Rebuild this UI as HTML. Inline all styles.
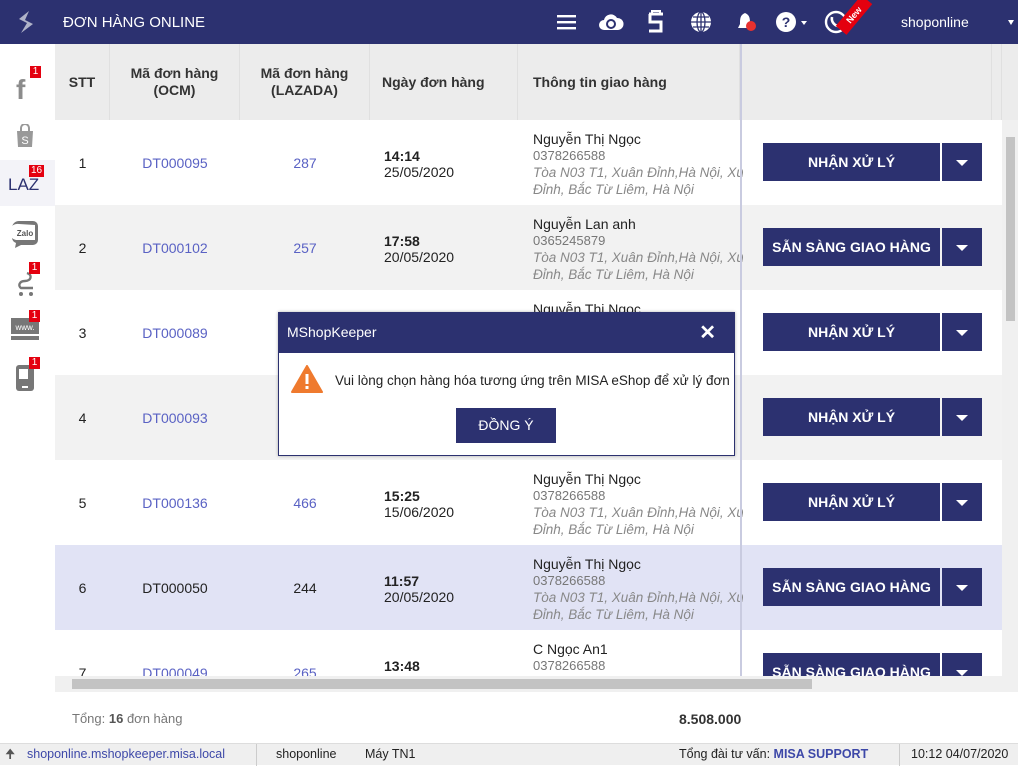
<!DOCTYPE html>
<html><head><meta charset="utf-8"><style>
*{box-sizing:border-box;margin:0;padding:0}
body{width:1018px;height:765px;overflow:hidden;position:relative;background:#fff;font-family:"Liberation Sans",Arial,sans-serif;font-size:14px;color:#222}
.hdr{position:absolute;left:0;top:0;width:1018px;height:44px;background:#2c3170;color:#fff}
.abs{position:absolute}
.side{position:absolute;left:0;top:44px;width:55px;height:699px;background:#fff}
.badge{position:absolute;background:#e4000f;color:#fff;font-size:10px;line-height:12px;padding:0 2px;min-width:11px;text-align:center}
.th{position:absolute;top:44px;height:76px;background:#ececec;font-weight:bold;font-size:14px;color:#333;display:flex;align-items:center;justify-content:center;text-align:center;border-right:1px solid #e0e0e0;line-height:17px}
.row{position:absolute;left:55px;width:947px;height:85px}
.c{position:absolute;top:0;height:85px;display:flex;align-items:center;justify-content:center}
.link{color:#5a62c4}
.info{position:absolute;left:478px;top:11px;width:210px;overflow:hidden;white-space:nowrap;line-height:16px;font-size:14px}
.info .p{color:#777;font-size:13px}
.info i{color:#888;font-size:13.5px}
.btn{position:absolute;left:708px;top:23px;width:177px;height:38px;background:#2c3170;color:#fff;font-weight:bold;font-size:14px;display:flex;align-items:center;justify-content:center;white-space:nowrap}
.dd{position:absolute;left:887px;top:23px;width:40px;height:38px;background:#2c3170}
.dd:after{content:"";position:absolute;left:14px;top:17px;border-left:6px solid transparent;border-right:6px solid transparent;border-top:6px solid #fff}
</style></head><body>
<div class="hdr">
 <svg class="abs" style="left:15px;top:10px" width="22" height="24" viewBox="0 0 22 24"><path d="M14 1 L4 9 L12 13 L6 23 L18 14 L10 10 Z" fill="#b0b3c8"/></svg>
 <div class="abs" style="left:63px;top:14px;font-size:15px">ĐƠN HÀNG ONLINE</div>
 <svg class="abs" style="left:557px;top:13px" width="20" height="18"><rect y="2" width="19" height="2.4" fill="#fff"/><rect y="8" width="19" height="2.4" fill="#fff"/><rect y="14" width="19" height="2.4" fill="#fff"/></svg>
 <svg class="abs" style="left:598px;top:11px" width="26" height="22" viewBox="0 0 26 22"><path d="M6 19 A5 5 0 0 1 6 9 A7 7 0 0 1 19 7 A6 6 0 0 1 20 19 Z" fill="#fff"/><circle cx="13" cy="13" r="4" fill="none" stroke="#2c3170" stroke-width="2"/></svg>
 <svg class="abs" style="left:647px;top:10px" width="18" height="24" viewBox="0 0 18 24"><path d="M5 4 V1 H13 V4" fill="none" stroke="#fff" stroke-width="2"/><path d="M2 4 H16 M3 4 V12 H14 V21 H2" fill="none" stroke="#fff" stroke-width="3"/></svg>
 <svg class="abs" style="left:690px;top:11px" width="22" height="22" viewBox="0 0 22 22"><circle cx="11" cy="11" r="10" fill="#fff"/><path d="M11 1 V21 M1 11 H21 M3 6 H19 M3 16 H19" stroke="#2c3170" stroke-width="1.3"/><ellipse cx="11" cy="11" rx="4" ry="10" fill="none" stroke="#2c3170" stroke-width="1.3"/></svg>
 <svg class="abs" style="left:736px;top:11px" width="22" height="22" viewBox="0 0 22 22"><path d="M9 2 C4 4 4 8 4 13 L2 17 H16 L14 13 C14 8 14 4 9 2Z" fill="#fff"/><circle cx="15" cy="15" r="5" fill="#e8312f"/></svg>
 <svg class="abs" style="left:776px;top:11px" width="36" height="22" viewBox="0 0 36 22"><circle cx="10" cy="11" r="10" fill="#fff"/><text x="10" y="16" font-size="14" font-weight="bold" text-anchor="middle" fill="#2c3170" font-family="Liberation Sans">?</text><path d="M25 10 H31 L28 14Z" fill="#fff"/></svg>
 <svg class="abs" style="left:824px;top:10px" width="24" height="24" viewBox="0 0 24 24"><circle cx="12" cy="12" r="10" fill="none" stroke="#fff" stroke-width="2.4"/><path d="M8 7 C7 12 11 17 17 16" fill="none" stroke="#fff" stroke-width="2.6"/></svg>
 <div class="abs" style="width:40px;height:14px;background:#e4000f;transform:rotate(-50deg);transform-origin:center;top:8px;left:834px;color:#fff;font-size:9px;font-weight:bold;text-align:center;line-height:14px">New</div>
 <div class="abs" style="left:901px;top:14px;font-size:14px">shoponline</div>
 <div class="abs" style="left:1008px;top:20px;border-left:3.5px solid transparent;border-right:3.5px solid transparent;border-top:5px solid #fff"></div>
</div>

<div class="side">
 <div class="abs" style="left:16px;top:30px;font-size:28px;font-weight:bold;color:#8c8c8c;font-family:'Liberation Sans'">f</div>
 <div class="badge" style="left:30px;top:22px">1</div>
 <svg class="abs" style="left:14px;top:80px" width="22" height="24"><path d="M3 7 H19 L18 23 H4Z" fill="#999"/><path d="M7 7 V4 A4 4 0 0 1 15 4 V7" fill="none" stroke="#999" stroke-width="2"/><text x="11" y="20" font-size="11" fill="#fff" text-anchor="middle" font-family="Liberation Sans">S</text></svg>
 <div class="abs" style="left:0;top:116px;width:55px;height:46px;background:#f3f3f8"></div>
 <div class="abs" style="left:8px;top:131px;font-size:17px;color:#2c3170">LAZ</div>
 <div class="badge" style="left:29px;top:121px">16</div>
 <svg class="abs" style="left:11px;top:176px" width="28" height="28"><path d="M8 1 H22 A5 5 0 0 1 27 6 V20 A5 5 0 0 1 22 25 H10 L4 28 L5 23 A6 6 0 0 1 1 18 V8 A7 7 0 0 1 8 1Z" fill="#777"/><path d="M8 4 A8 8 0 0 0 5 20 H24 V5 Z" fill="#fff"/><text x="14" y="16" font-size="8" font-weight="bold" fill="#555" text-anchor="middle" font-family="Liberation Sans">Zalo</text></svg>
 <svg class="abs" style="left:13px;top:227px" width="24" height="26"><path d="M14 2 C20 4 18 10 12 10 C6 10 5 15 8 17 H20" fill="none" stroke="#777" stroke-width="2.4"/><circle cx="8" cy="23" r="2" fill="#777"/><circle cx="18" cy="23" r="2" fill="#777"/></svg>
 <div class="badge" style="left:29px;top:218px">1</div>
 <svg class="abs" style="left:10px;top:273px" width="30" height="24"><rect x="1" y="1" width="28" height="16" fill="#777"/><rect x="1" y="19" width="28" height="4" fill="#777"/><text x="15" y="13" font-size="8" fill="#fff" text-anchor="middle" font-family="Liberation Sans">www.</text></svg>
 <div class="badge" style="left:29px;top:266px">1</div>
 <svg class="abs" style="left:15px;top:320px" width="20" height="28"><rect x="1" y="1" width="18" height="26" rx="3" fill="#777"/><rect x="4" y="5" width="9" height="10" fill="#fff"/><rect x="7" y="22" width="6" height="2" fill="#fff"/></svg>
 <div class="badge" style="left:29px;top:313px">1</div>
</div>

<div class="th" style="left:55px;width:55px">STT</div>
<div class="th" style="left:110px;width:130px">Mã đơn hàng<br>(OCM)</div>
<div class="th" style="left:240px;width:130px">Mã đơn hàng<br>(LAZADA)</div>
<div class="th" style="left:370px;width:148px;justify-content:flex-start;padding-left:12px">Ngày đơn hàng</div>
<div class="th" style="left:518px;width:222px;justify-content:flex-start;padding-left:15px">Thông tin giao hàng</div>
<div class="th" style="left:740px;width:252px"></div>
<div class="th" style="left:992px;width:10px"></div>
<div class="abs" style="left:1002px;top:44px;width:16px;height:76px;background:#ececec"></div>

<div class="row" style="top:120px;background:#fff">
 <div class="c" style="left:0;width:55px">1</div><div class="c link" style="left:55px;width:130px">DT000095</div><div class="c link" style="left:185px;width:130px">287</div>
 <div class="abs" style="left:329px;top:28px;line-height:16px"><b>14:14</b><br>25/05/2020</div>
 <div class="info">Nguyễn Thị Ngọc<br><span class="p">0378266588</span><br><i>Tòa N03 T1, Xuân Đỉnh,Hà Nội, Xuân</i><br><i>Đỉnh, Bắc Từ Liêm, Hà Nội</i></div>
 <div class="btn">NHẬN XỬ LÝ</div><div class="dd"></div></div>
<div class="row" style="top:205px;background:#f2f2f2">
 <div class="c" style="left:0;width:55px">2</div><div class="c link" style="left:55px;width:130px">DT000102</div><div class="c link" style="left:185px;width:130px">257</div>
 <div class="abs" style="left:329px;top:28px;line-height:16px"><b>17:58</b><br>20/05/2020</div>
 <div class="info">Nguyễn Lan anh<br><span class="p">0365245879</span><br><i>Tòa N03 T1, Xuân Đỉnh,Hà Nội, Xuân</i><br><i>Đỉnh, Bắc Từ Liêm, Hà Nội</i></div>
 <div class="btn">SẴN SÀNG GIAO HÀNG</div><div class="dd"></div></div>
<div class="row" style="top:290px;background:#fff">
 <div class="c" style="left:0;width:55px">3</div><div class="c link" style="left:55px;width:130px">DT000089</div>
 <div class="info">Nguyễn Thị Ngọc</div>
 <div class="btn">NHẬN XỬ LÝ</div><div class="dd"></div></div>
<div class="row" style="top:375px;background:#f2f2f2">
 <div class="c" style="left:0;width:55px">4</div><div class="c link" style="left:55px;width:130px">DT000093</div>
 <div class="btn">NHẬN XỬ LÝ</div><div class="dd"></div></div>
<div class="row" style="top:460px;background:#fff">
 <div class="c" style="left:0;width:55px">5</div><div class="c link" style="left:55px;width:130px">DT000136</div><div class="c link" style="left:185px;width:130px">466</div>
 <div class="abs" style="left:329px;top:28px;line-height:16px"><b>15:25</b><br>15/06/2020</div>
 <div class="info">Nguyễn Thị Ngọc<br><span class="p">0378266588</span><br><i>Tòa N03 T1, Xuân Đỉnh,Hà Nội, Xuân</i><br><i>Đỉnh, Bắc Từ Liêm, Hà Nội</i></div>
 <div class="btn">NHẬN XỬ LÝ</div><div class="dd"></div></div>
<div class="row" style="top:545px;background:#e1e3f5">
 <div class="c" style="left:0;width:55px">6</div><div class="c" style="left:55px;width:130px">DT000050</div><div class="c" style="left:185px;width:130px">244</div>
 <div class="abs" style="left:329px;top:28px;line-height:16px"><b>11:57</b><br>20/05/2020</div>
 <div class="info">Nguyễn Thị Ngọc<br><span class="p">0378266588</span><br><i>Tòa N03 T1, Xuân Đỉnh,Hà Nội, Xuân</i><br><i>Đỉnh, Bắc Từ Liêm, Hà Nội</i></div>
 <div class="btn">SẴN SÀNG GIAO HÀNG</div><div class="dd"></div></div>
<div class="row" style="top:630px;height:46px;background:#fff;overflow:hidden">
 <div class="c" style="left:0;width:55px">7</div><div class="c link" style="left:55px;width:130px">DT000049</div><div class="c link" style="left:185px;width:130px">265</div>
 <div class="abs" style="left:329px;top:28px;line-height:16px"><b>13:48</b></div>
 <div class="info">C Ngọc An1<br><span class="p">0378266588</span></div>
 <div class="btn">SẴN SÀNG GIAO HÀNG</div><div class="dd"></div></div>

<div class="abs" style="left:740px;top:44px;width:2px;height:632px;background:#c9cbe0"></div>
<div class="abs" style="left:1002px;top:120px;width:16px;height:556px;background:#f0f0f0"></div>
<div class="abs" style="left:1006px;top:137px;width:9px;height:184px;background:#c3c3c3"></div>
<div class="abs" style="left:55px;top:676px;width:947px;height:16px;background:#f0f0f0"></div>
<div class="abs" style="left:72px;top:679px;width:740px;height:10px;background:#c3c3c3"></div>
<div class="abs" style="left:1002px;top:676px;width:16px;height:16px;background:#f0f0f0"></div>

<div class="abs" style="left:72px;top:711px;color:#777;font-size:13px">Tổng: <b style="color:#555">16</b> đơn hàng</div>
<div class="abs" style="left:679px;top:711px;font-weight:bold;font-size:14px;color:#333">8.508.000</div>

<div class="abs" style="left:278px;top:312px;width:457px;height:144px;background:#fff;border:1px solid #2c3170;box-shadow:0 0 3px rgba(0,0,0,.3)">
 <div style="height:40px;background:#2c3170;color:#fff;font-size:14px;padding:11px 8px;position:relative">MShopKeeper<span style="position:absolute;right:18px;top:7px;font-size:20px;font-weight:bold">✕</span></div>
 <svg class="abs" style="left:12px;top:52px" width="32" height="28"><path d="M16 1 L31 27 H1Z" fill="#ef7a2e" stroke="#ef7a2e" stroke-linejoin="round" stroke-width="2"/><rect x="14.5" y="9" width="3" height="10" fill="#fff"/><rect x="14.5" y="21" width="3" height="3" fill="#fff"/></svg>
 <div class="abs" style="left:56px;top:60px;font-size:13.5px;color:#222">Vui lòng chọn hàng hóa tương ứng trên MISA eShop để xử lý đơn</div>
 <div class="abs" style="left:177px;top:95px;width:100px;height:35px;background:#2c3170;color:#fff;font-size:14px;text-align:center;line-height:35px">ĐỒNG Ý</div>
</div>

<div class="abs" style="left:0;top:743px;width:1018px;height:22px;background:#efefef;border-top:1px solid #ddd;font-size:12.5px;line-height:21px">
 <span class="abs" style="left:5px;color:#555">🠉</span>
 <span class="abs" style="left:27px;color:#3d48a8">shoponline.mshopkeeper.misa.local</span>
 <span class="abs" style="left:256px;top:0;width:1px;height:22px;background:#ccc"></span>
 <span class="abs" style="left:276px">shoponline</span>
 <span class="abs" style="left:365px">Máy TN1</span>
 <span class="abs" style="left:679px">Tổng đài tư vấn: <b style="color:#3d48a8">MISA SUPPORT</b></span>
 <span class="abs" style="left:899px;top:0;width:1px;height:22px;background:#ccc"></span>
 <span class="abs" style="left:911px">10:12 04/07/2020</span>
</div>
</body></html>
